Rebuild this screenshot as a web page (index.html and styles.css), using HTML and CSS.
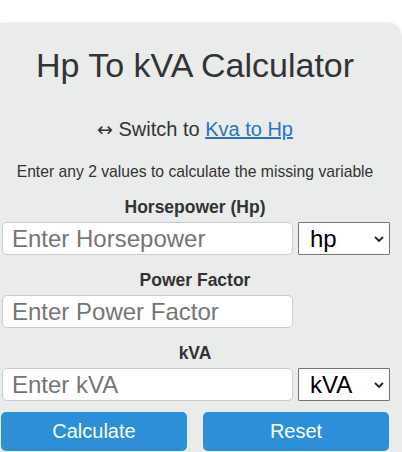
FILE: index.html
```html
<!DOCTYPE html>
<html lang="en">
<head>
    <meta charset="UTF-8">
    <meta name="viewport" content="width=device-width, initial-scale=1.0">
    <title>Hp To kVA Calculator</title>
    <link rel="stylesheet" href="styles.css">
</head>
<body>
    <div class="calculator">
        <h1>Hp To kVA Calculator</h1>

        <p class="switch"><span class="swap">&harr;</span> Switch to <a href="#">Kva to Hp</a></p>
        <p class="info">Enter any 2 values to calculate the missing variable</p>

        <div class="field">
            <label for="hp">Horsepower (Hp)</label>
            <div class="row">
                <input type="text" id="hp" placeholder="Enter Horsepower">
                <div class="unit">
                    <select>
                        <option>hp</option>
                    </select>
                    <svg class="arrow" width="10" height="6" viewBox="0 0 10 6"><path d="M1 1l4 4 4-4" fill="none" stroke="#222" stroke-width="1.8"/></svg>
                </div>
            </div>
        </div>

        <div class="field">
            <label for="pf">Power Factor</label>
            <div class="row">
                <input type="text" id="pf" placeholder="Enter Power Factor">
            </div>
        </div>

        <div class="field">
            <label for="kva">kVA</label>
            <div class="row">
                <input type="text" id="kva" placeholder="Enter kVA">
                <div class="unit">
                    <select>
                        <option>kVA</option>
                    </select>
                    <svg class="arrow" width="10" height="6" viewBox="0 0 10 6"><path d="M1 1l4 4 4-4" fill="none" stroke="#222" stroke-width="1.8"/></svg>
                </div>
            </div>
        </div>

        <div class="buttons">
            <button>Calculate</button>
            <button>Reset</button>
        </div>
    </div>
</body>
</html>
```

FILE: styles.css
```css
body {
    margin: 0;
    font-family: "Liberation Sans", Arial, sans-serif;
    background-color: #fff;
    color: #333;
}
.calculator {
    margin-top: 23px;
    padding: 22px 13px 20px 1px;
    background-color: #eaebeb;
    border-top-right-radius: 15px;
    box-shadow: 1px -1px 3px rgba(0, 0, 0, 0.06);
    text-align: center;
}
h1 {
    margin: 0;
    font-size: 34px;
    line-height: 40px;
    font-weight: normal;
}
.switch {
    margin: 32px 0 0;
    font-size: 20px;
    line-height: 24px;
}
.switch .swap {
    font-family: "DejaVu Sans", sans-serif;
    font-size: 19px;
}
.switch a {
    color: #2f72c2;
}
.info {
    margin: 21px 0 0;
    font-size: 15.7px;
    line-height: 20px;
}
.field {
    margin-top: 15px;
}
.field label {
    display: block;
    font-size: 17.5px;
    line-height: 20px;
    font-weight: bold;
}
.row {
    display: flex;
    gap: 5px;
    margin-top: 5px;
}
.row input {
    width: 291px;
    height: 33px;
    box-sizing: border-box;
    margin-left: 1px;
    padding: 0 9px;
    font-family: "Liberation Sans", Arial, sans-serif;
    font-size: 24px;
    border: 1px solid #ccc;
    border-radius: 5px;
    background: #fff;
}
.row input::placeholder {
    color: #757575;
}
.unit {
    position: relative;
}
.unit select {
    appearance: none;
    width: 92px;
    height: 33px;
    box-sizing: border-box;
    padding: 0 0 0 11px;
    font-family: "Liberation Sans", Arial, sans-serif;
    font-size: 24px;
    color: #000;
    background: #fff;
    border: 1px solid #767676;
    border-radius: 1px;
}
.unit .arrow {
    position: absolute;
    right: 6px;
    top: 14px;
    pointer-events: none;
}
.buttons {
    display: flex;
    gap: 16px;
    margin-top: 11px;
}
.buttons button {
    flex: 1;
    height: 39px;
    font-family: "Liberation Sans", Arial, sans-serif;
    font-size: 20px;
    color: white;
    background-color: #2c8fd8;
    border: none;
    border-radius: 5px;
    cursor: pointer;
}
```
